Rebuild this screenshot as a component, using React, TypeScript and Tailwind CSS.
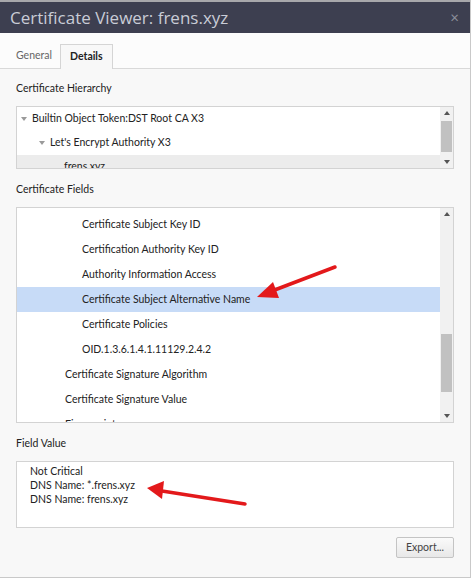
import React from 'react';

const fields = [
  { label: 'Certificate Subject Key ID', indent: 2 },
  { label: 'Certification Authority Key ID', indent: 2 },
  { label: 'Authority Information Access', indent: 2 },
  { label: 'Certificate Subject Alternative Name', indent: 2, selected: true },
  { label: 'Certificate Policies', indent: 2 },
  { label: 'OID.1.3.6.1.4.1.11129.2.4.2', indent: 2 },
  { label: 'Certificate Signature Algorithm', indent: 1 },
  { label: 'Certificate Signature Value', indent: 1 },
  { label: 'Fingerprints', indent: 1 },
];

function Scrollbar({ thumbTop, thumbHeight }: { thumbTop: number; thumbHeight: number }) {
  return (
    <div className="w-[13px] bg-[#f1f1f1] flex flex-col items-center relative shrink-0">
      <div className="h-[12px] flex items-center justify-center">
        <div className="w-0 h-0 border-l-[3.5px] border-r-[3.5px] border-b-[4px] border-l-transparent border-r-transparent border-b-[#555]" />
      </div>
      <div className="flex-1 w-full relative">
        <div className="absolute left-[1px] right-[1px] bg-[#c1c1c1]" style={{ top: thumbTop, height: thumbHeight }} />
      </div>
      <div className="h-[12px] flex items-center justify-center">
        <div className="w-0 h-0 border-l-[3.5px] border-r-[3.5px] border-t-[4px] border-l-transparent border-r-transparent border-t-[#555]" />
      </div>
    </div>
  );
}

function Caret() {
  return <div className="w-0 h-0 border-l-[3.5px] border-r-[3.5px] border-t-[4px] border-l-transparent border-r-transparent border-t-[#9a9a9a]" />;
}

export default function App() {
  return (
    <div className="w-[474px] h-[581px] bg-white relative overflow-hidden text-[#222]" style={{ fontFamily: 'Lato, "Open Sans", sans-serif' }}>
      <div className="w-[471px] h-[578px] border-r border-b border-[#c9c9c9] flex flex-col bg-[#f8f8f8]">
        <div className="h-[2px] bg-[#a8a8ab]" />
        {/* title bar */}
        <div className="h-[31px] bg-[#3d3f50] flex items-center justify-between pl-[10px] pr-[11px]">
          <span className="text-[17px] text-[#c9ccd6] leading-none" style={{ fontFamily: '"Open Sans", sans-serif' }}>Certificate Viewer: frens.xyz</span>
          <span className="text-[15px] text-[#8c8f9b] leading-none">×</span>
        </div>
        {/* tabs */}
        <div className="h-[36px] bg-[#fcfcfc] border-b border-[#d9d9d9] flex items-end pl-[8px] text-[10.5px]">
          <div className="h-[24px] px-[8px] flex items-center text-[#666]">General</div>
          <div className="h-[25px] -mb-px px-[9px] flex items-center font-bold text-[#222] bg-[#f8f8f8] border border-b-0 border-[#d5d5d5]">Details</div>
        </div>

        <div className="px-[16px] flex flex-col text-[10.5px]">
          <div className="leading-[14px] mt-[12px]">Certificate Hierarchy</div>
          <div className="mt-[11px] h-[63px] bg-white border border-[#d3d3d3] flex overflow-hidden">
            <div className="flex-1 flex flex-col overflow-hidden">
              <div className="h-[24px] flex items-center pl-[4px] gap-[5px] shrink-0"><Caret />Builtin Object Token:DST Root CA X3</div>
              <div className="h-[24px] flex items-center pl-[22px] gap-[5px] shrink-0"><Caret />Let's Encrypt Authority X3</div>
              <div className="h-[24px] flex items-center pl-[47px] bg-[#ececec] shrink-0">frens.xyz</div>
            </div>
            <Scrollbar thumbTop={2} thumbHeight={31} />
          </div>

          <div className="leading-[14px] mt-[13px]">Certificate Fields</div>
          <div className="mt-[11px] h-[216px] bg-white border border-[#d3d3d3] flex">
            <div className="flex-1 flex flex-col overflow-hidden pt-[4px]">
              {fields.map((f) => (
                <div
                  key={f.label}
                  className={`h-[25px] shrink-0 flex items-center ${f.indent === 2 ? 'pl-[65px]' : 'pl-[48px]'} ${f.selected ? 'bg-[#c7dbf7]' : ''}`}
                >
                  {f.label}
                </div>
              ))}
            </div>
            <Scrollbar thumbTop={114} thumbHeight={58} />
          </div>

          <div className="leading-[14px] mt-[13px]">Field Value</div>
          <div className="mt-[11px] h-[67px] bg-white border border-[#d3d3d3] pl-[13px] pt-[2px] leading-[14px]">
            <div>Not Critical</div>
            <div>DNS Name: *.frens.xyz</div>
            <div>DNS Name: frens.xyz</div>
          </div>

          <div className="flex justify-end mt-[9px]">
            <div className="h-[21px] w-[58px] flex items-center justify-center text-[#444] border border-[#c4c4c4] rounded-[2px] bg-gradient-to-b from-[#fafafa] to-[#e8e8e8]">Export...</div>
          </div>
        </div>
      </div>

      {/* annotation arrows */}
      <svg className="absolute inset-0 pointer-events-none" width="474" height="581">
        <line x1="335" y1="267" x2="272" y2="291" stroke="#e3191b" strokeWidth="3.5" strokeLinecap="round" />
        <polygon points="257,297 273,282 279,298" fill="#e3191b" />
        <line x1="245" y1="504" x2="162" y2="491" stroke="#e3191b" strokeWidth="3.5" strokeLinecap="round" />
        <polygon points="147,488 164,481 162,499" fill="#e3191b" />
      </svg>
    </div>
  );
}
